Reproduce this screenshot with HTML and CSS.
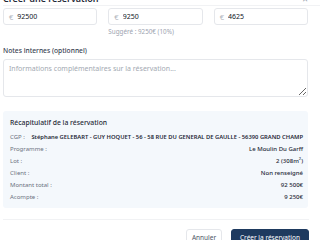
FILE: index.html
```html
<!DOCTYPE html>
<html lang="fr">
<head>
    <meta charset="UTF-8">
    <meta name="viewport" content="width=device-width, initial-scale=1.0">
    <title>Créer une réservation</title>
<link rel="stylesheet" href="styles.css">
</head>
<body>

<div class="dialog">

    <div class="dialog-head">
        <h2>Créer une réservation</h2>
        <span class="close">&times;</span>
    </div>

    <div class="amounts">
        <div class="amount">
            <label class="money"><span class="cur">€</span> <input type="text" value="92500"></label>
        </div>
        <div class="amount">
            <label class="money"><span class="cur">€</span> <input type="text" value="9250"></label>
            <div class="hint">Suggéré : 9250€ (10%)</div>
        </div>
        <div class="amount">
            <label class="money"><span class="cur">€</span> <input type="text" value="4625"></label>
        </div>
    </div>

    <div class="field">
        <label class="field-label" for="notes">Notes internes (optionnel)</label>
        <textarea id="notes" placeholder="Informations complémentaires sur la réservation..."></textarea>
    </div>

    <div class="recap">
        <h3>Récapitulatif de la réservation</h3>
        <div class="recap-row">
            <span class="lbl">CGP :</span>
            <span class="val strong">Stéphane GELEBART - GUY HOQUET - 56 - 58 RUE DU GENERAL DE GAULLE - 56390 GRAND CHAMP</span>
        </div>
        <div class="recap-row">
            <span class="lbl">Programme :</span>
            <span class="val">Le Moulin Du Garff</span>
        </div>
        <div class="recap-row">
            <span class="lbl">Lot :</span>
            <span class="val">2 (308m<sup>2</sup>)</span>
        </div>
        <div class="recap-row">
            <span class="lbl">Client :</span>
            <span class="val">Non renseigné</span>
        </div>
        <div class="recap-row">
            <span class="lbl">Montant total :</span>
            <span class="val">92 500€</span>
        </div>
        <div class="recap-row">
            <span class="lbl">Acompte :</span>
            <span class="val">9 250€</span>
        </div>
    </div>

    <div class="dialog-foot">
        <button type="button" class="btn btn-ghost">Annuler</button>
        <button type="submit" class="btn btn-main">Créer la réservation</button>
    </div>

</div>

</body>
</html>
```

FILE: styles.css
```css
    :root {
        font-family: "Noto Sans", "Open Sans", sans-serif;
        color: #1f2937;
    }

    body {
        margin: 0;
        background: #ffffff;
        overflow: hidden;
    }

    .dialog {
        width: 305px;
        margin-left: 3px;
        margin-top: -8px;
    }

    .dialog-head {
        display: flex;
        justify-content: space-between;
        align-items: flex-end;
        height: 13px;
        border-bottom: 1px solid #f1f2f4;
        margin-right: -12px;
        padding-right: 12px;
    }
    .dialog-head h2 {
        margin: 0;
        font-size: 9px;
        line-height: 12px;
        font-weight: 600;
        color: #1f2937;
    }
    .close {
        font-size: 10px;
        line-height: 12px;
        color: #9ca3af;
    }

    .amounts {
        display: grid;
        grid-template-columns: 1fr 1fr 1fr;
        gap: 11px;
        margin-top: 2px;
    }
    .money {
        display: flex;
        align-items: center;
        height: 17px;
        box-sizing: border-box;
        border: 1px solid #e5e7eb;
        border-radius: 3px;
        padding: 0 5px;
        background: #fff;
    }
    .cur {
        font-size: 7.5px;
        color: #b0b5bd;
        margin-right: 4px;
    }
    .money input {
        border: 0;
        outline: 0;
        padding: 0;
        width: 60px;
        font: inherit;
        font-size: 7px;
        color: #111827;
        background: transparent;
    }
    .hint {
        margin-top: 3px;
        font-size: 6.3px;
        line-height: 8px;
        color: #9ca3af;
    }

    .field {
        margin-top: 11px;
    }
    .field-label {
        display: block;
        font-size: 6.7px;
        line-height: 8px;
        font-weight: 500;
        color: #374151;
        margin-bottom: 4px;
    }
    textarea {
        display: block;
        width: 100%;
        height: 38px;
        box-sizing: border-box;
        border: 1px solid #e5e7eb;
        border-radius: 3px;
        padding: 4px 5px;
        font: inherit;
        font-size: 7px;
        resize: vertical;
    }
    textarea::placeholder {
        color: #a3a9b2;
    }

    .recap {
        margin-top: 14px;
        background: #f4f8fc;
        border-radius: 3px;
        padding: 7px 5px 5px 7px;
    }
    .recap h3 {
        margin: 0 0 3px;
        font-size: 6.8px;
        line-height: 10px;
        font-weight: 500;
        color: #1f2937;
    }
    .recap-row {
        display: flex;
        justify-content: space-between;
        gap: 5px;
        font-size: 6px;
        line-height: 12px;
        white-space: nowrap;
    }
    .lbl {
        color: #6b7280;
    }
    .val {
        color: #1f2937;
        font-weight: 500;
    }
    .val.strong {
        font-weight: 600;
        font-size: 5.8px;
    }
    .val sup {
        font-size: 4px;
        line-height: 0;
    }

    .dialog-foot {
        display: flex;
        justify-content: flex-end;
        gap: 9px;
        margin-top: 11px;
        padding-top: 9px;
        border-top: 1px solid #f1f2f4;
        margin-right: -1px;
    }
    .btn {
        font: inherit;
        font-size: 6.5px;
        height: 17px;
        padding: 0;
        border-radius: 3px;
    }
    .btn-ghost {
        width: 36px;
        background: #fff;
        border: 1px solid #e5e7eb;
        color: #4b5563;
    }
    .btn-main {
        width: 78px;
        background: #1e3a5f;
        border: 1px solid #1e3a5f;
        color: #fff;
    }
```
